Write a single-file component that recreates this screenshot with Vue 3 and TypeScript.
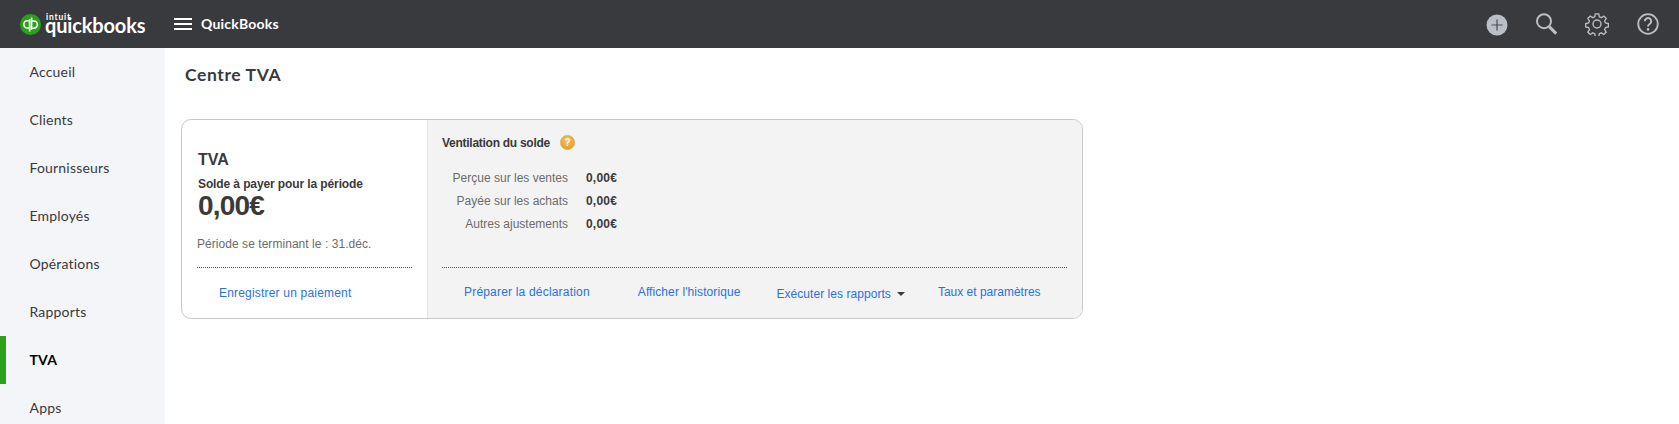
<script setup lang="ts">
const nav: string[] = ['Accueil', 'Clients', 'Fournisseurs', 'Employés', 'Opérations', 'Rapports', 'TVA', 'Apps']
const rows = [
  { label: 'Perçue sur les ventes', value: '0,00€' },
  { label: 'Payée sur les achats', value: '0,00€' },
  { label: 'Autres ajustements', value: '0,00€' },
]
</script>

<template>
  <div class="app">
    <header class="topbar">
      <div class="brand">
        <svg class="mark" width="21" height="21" viewBox="0 0 21 21">
          <circle cx="10.5" cy="10.5" r="10.5" fill="#2ca01c" />
          <path d="M9.6 5.2V17.4M9.6 6.8H7.4a3.6 3.6 0 0 0 0 7.2h2.2M11.6 3.6V15.8M11.6 7h2.2a3.6 3.6 0 0 1 0 7.2h-2.2" fill="none" stroke="#fff" stroke-width="1.6" />
        </svg>
        <div class="wordmark">
          <span class="intuit">intuit</span>
          <span class="qb">quickbooks</span>
        </div>
      </div>
      <div class="burger"><i></i><i></i><i></i></div>
      <div class="company">QuickBooks</div>
      <div class="tools">
        <svg class="plus" width="24" height="24" viewBox="0 0 24 24">
          <circle cx="12" cy="13" r="10.5" fill="#babec5" />
          <path d="M12 7.5v11M6.5 13h11" stroke="#4a4c50" stroke-width="1.2" />
        </svg>
        <svg width="24" height="24" viewBox="0 0 24 24" fill="none" stroke="#babec5">
          <circle cx="10" cy="9.2" r="7" stroke-width="2" />
          <path d="M15.2 14.6l7 7" stroke-width="3" />
        </svg>
        <svg width="24" height="24" viewBox="0 0 24 24" fill="none" stroke="#babec5" stroke-width="1.4">
          <circle cx="12" cy="12" r="4" />
          <path d="M10.2 1.5h3.6l.6 3 2.1.9 2.6-1.7 2.5 2.5-1.7 2.6.9 2.1 3 .6v3.6l-3 .6-.9 2.1 1.7 2.6-2.5 2.5-2.6-1.7-2.1.9-.6 3h-3.6l-.6-3-2.1-.9-2.6 1.7-2.5-2.5 1.7-2.6-.9-2.1-3-.6v-3.6l3-.6.9-2.1-1.7-2.6 2.5-2.5 2.6 1.7 2.1-.9z" transform="translate(.5 .5) scale(.96)" />
        </svg>
        <svg width="24" height="24" viewBox="0 0 24 24" fill="none" stroke="#babec5">
          <circle cx="12" cy="12" r="9.8" stroke-width="1.8" />
          <path d="M8.8 9.3a3.2 3.2 0 1 1 4.9 2.7c-1.1.7-1.7 1.2-1.7 2.6" stroke-width="2" />
          <circle cx="12" cy="17.4" r="1.3" fill="#babec5" stroke="none" />
        </svg>
      </div>
    </header>

    <div class="body">
      <nav class="sidebar">
        <a v-for="item in nav" :key="item" class="nav-item" :class="{ active: item === 'TVA' }">{{ item }}</a>
      </nav>

      <main class="content">
        <h1 class="title">Centre TVA</h1>

        <section class="card">
          <div class="left">
            <div class="left-top">
              <h2 class="tva">TVA</h2>
              <div class="due-label">Solde à payer pour la période</div>
              <div class="amount">0,00€</div>
              <div class="period">Période se terminant le : 31.déc.</div>
            </div>
            <div class="left-foot">
              <a class="link wide">Enregistrer un paiement</a>
            </div>
          </div>

          <div class="right">
            <div class="right-top">
              <div class="break-title">
                <span>Ventilation du solde</span>
                <span class="help">?</span>
              </div>
              <div class="rows">
                <div v-for="r in rows" :key="r.label" class="row">
                  <span class="row-label">{{ r.label }}</span>
                  <span class="row-value">{{ r.value }}</span>
                </div>
              </div>
            </div>
            <div class="right-foot">
              <a class="link wide l1">Préparer la déclaration</a>
              <a class="link l2">Afficher l'historique</a>
              <a class="link l3">Exécuter les rapports<i class="caret"></i></a>
              <a class="link l4">Taux et paramètres</a>
            </div>
          </div>
        </section>
      </main>
    </div>
  </div>
</template>

<style>
html, body { margin: 0; overflow: hidden; background: #fff; }
</style>

<style scoped>
.app {
  height: 424px;
  overflow: hidden;
  font-family: "Liberation Sans", Arial, sans-serif;
  display: flex;
  flex-direction: column;
}
.topbar {
  height: 48px;
  flex: none;
  background: #393a3d;
  display: flex;
  align-items: center;
  color: #fff;
}
.brand {
  display: flex;
  align-items: center;
  width: 174px;
  padding-left: 20px;
  box-sizing: border-box;
  height: 48px;
}
.mark { flex: none; }
.wordmark {
  display: flex;
  flex-direction: column;
  margin-left: 4px;
  align-self: flex-start;
  margin-top: 14px;
}
.intuit {
  font: 700 8.5px/7px "Lato", sans-serif;
  letter-spacing: .8px;
  padding-left: 1px;
}
.qb {
  font: 700 20px/10px "Lato", sans-serif;
  letter-spacing: -.15px;
  margin-top: -1px;
}
.burger {
  width: 18px;
  display: flex;
  flex-direction: column;
  gap: 3px;
}
.burger i {
  display: block;
  height: 2px;
  background: #fff;
}
.company {
  margin-left: 9px;
  font: 700 14px/16px "Lato", sans-serif;
  letter-spacing: .2px;
}
.tools {
  margin-left: auto;
  display: flex;
  gap: 27px;
  padding-right: 19px;
  margin-top: -1px;
}
.plus { margin-right: -2px; }
.body { flex: 1; display: flex; min-height: 0; }
.sidebar {
  width: 165px;
  flex: none;
  background: #f4f5f8;
  display: flex;
  flex-direction: column;
}
.nav-item {
  height: 48px;
  flex: none;
  display: flex;
  align-items: center;
  padding-left: 23.5px;
  border-left: 6px solid transparent;
  font: 400 14px/20px "Lato", sans-serif;
  letter-spacing: .18px;
  color: #393a3d;
}
.nav-item.active {
  border-left-color: #2ca01c;
  color: #000;
  font-weight: 700;
}
.content { flex: 1; padding-left: 16px; min-width: 0; }
.title {
  margin: 0;
  padding: 15px 0 0 4px;
  font: 700 17.5px/24px "Lato", sans-serif;
  letter-spacing: .6px;
  color: #393a3d;
}
.card {
  margin-top: 32px;
  width: 902px;
  height: 200px;
  box-sizing: border-box;
  border: 1px solid #c9c9c9;
  border-radius: 10px;
  overflow: hidden;
  display: flex;
  background: #fff;
}
.left {
  width: 245px;
  flex: none;
  box-sizing: border-box;
  padding: 0 15px;
  display: flex;
  flex-direction: column;
}
.left-top {
  height: 148px;
  box-sizing: border-box;
  border-bottom: 1px dotted #555;
  padding-top: 30px;
}
.tva {
  margin: 0 0 0 1px;
  font: 700 16px/20px "Liberation Sans", sans-serif;
  color: #3a3a3a;
}
.due-label {
  margin: 7px 0 0 1px;
  font: 700 12px/14px "Liberation Sans", sans-serif;
  letter-spacing: -.11px;
  color: #3a3a3a;
}
.amount {
  margin: -2px 0 0 1px;
  font: 700 28px/34px "Liberation Sans", sans-serif;
  letter-spacing: -.8px;
  color: #3a3a3a;
}
.period {
  margin-top: 14px;
  font: 400 12px/14px "Liberation Sans", sans-serif;
  letter-spacing: .05px;
  color: #6b6b6b;
}
.left-foot {
  padding: 15px 0 0 22px;
}
.link {
  font: 400 12px/14px "Liberation Sans", sans-serif;
  color: #2b72dc;
  letter-spacing: .09px;
}
.link.wide { letter-spacing: .19px; }
.right {
  flex: 1;
  background: #f3f3f3;
  box-shadow: inset 1px 0 1px #e4e4e4;
  padding: 0 15px;
  display: flex;
  flex-direction: column;
}
.right-top {
  height: 148px;
  box-sizing: border-box;
  border-bottom: 1px dotted #555;
  padding-top: 15px;
}
.break-title {
  display: flex;
  align-items: center;
  font: 700 12px/14px "Liberation Sans", sans-serif;
  letter-spacing: -.27px;
  color: #3a3a3a;
}
.help {
  margin-left: 10px;
  width: 15px;
  height: 15px;
  border-radius: 50%;
  background: radial-gradient(circle at 50% 35%, #f8c455, #e0922a);
  border: 1px solid #e8a94a;
  box-sizing: border-box;
  color: #fff;
  font: 700 10px/13px "Liberation Sans", sans-serif;
  letter-spacing: 0;
  text-align: center;
}
.rows { margin-top: 16px; }
.row {
  display: flex;
  height: 23px;
  align-items: center;
  font: 400 12px/14px "Liberation Sans", sans-serif;
}
.row-label { width: 126px; text-align: right; color: #6b6b6b; }
.row-value { margin-left: 18px; font-weight: 700; letter-spacing: .2px; color: #3a3a3a; }
.right-foot {
  display: flex;
  padding-top: 17px;
}
.l1 { margin-left: 22px; }
.l2 { margin-left: 48px; }
.l3 { margin-left: 36px; margin-top: 2px; letter-spacing: .05px; }
.l4 { margin-left: 33px; letter-spacing: 0; }
.caret {
  display: inline-block;
  margin-left: 6px;
  vertical-align: 2px;
  border: 4px solid transparent;
  border-top-color: #393a3d;
  border-bottom: 0;
}
</style>
